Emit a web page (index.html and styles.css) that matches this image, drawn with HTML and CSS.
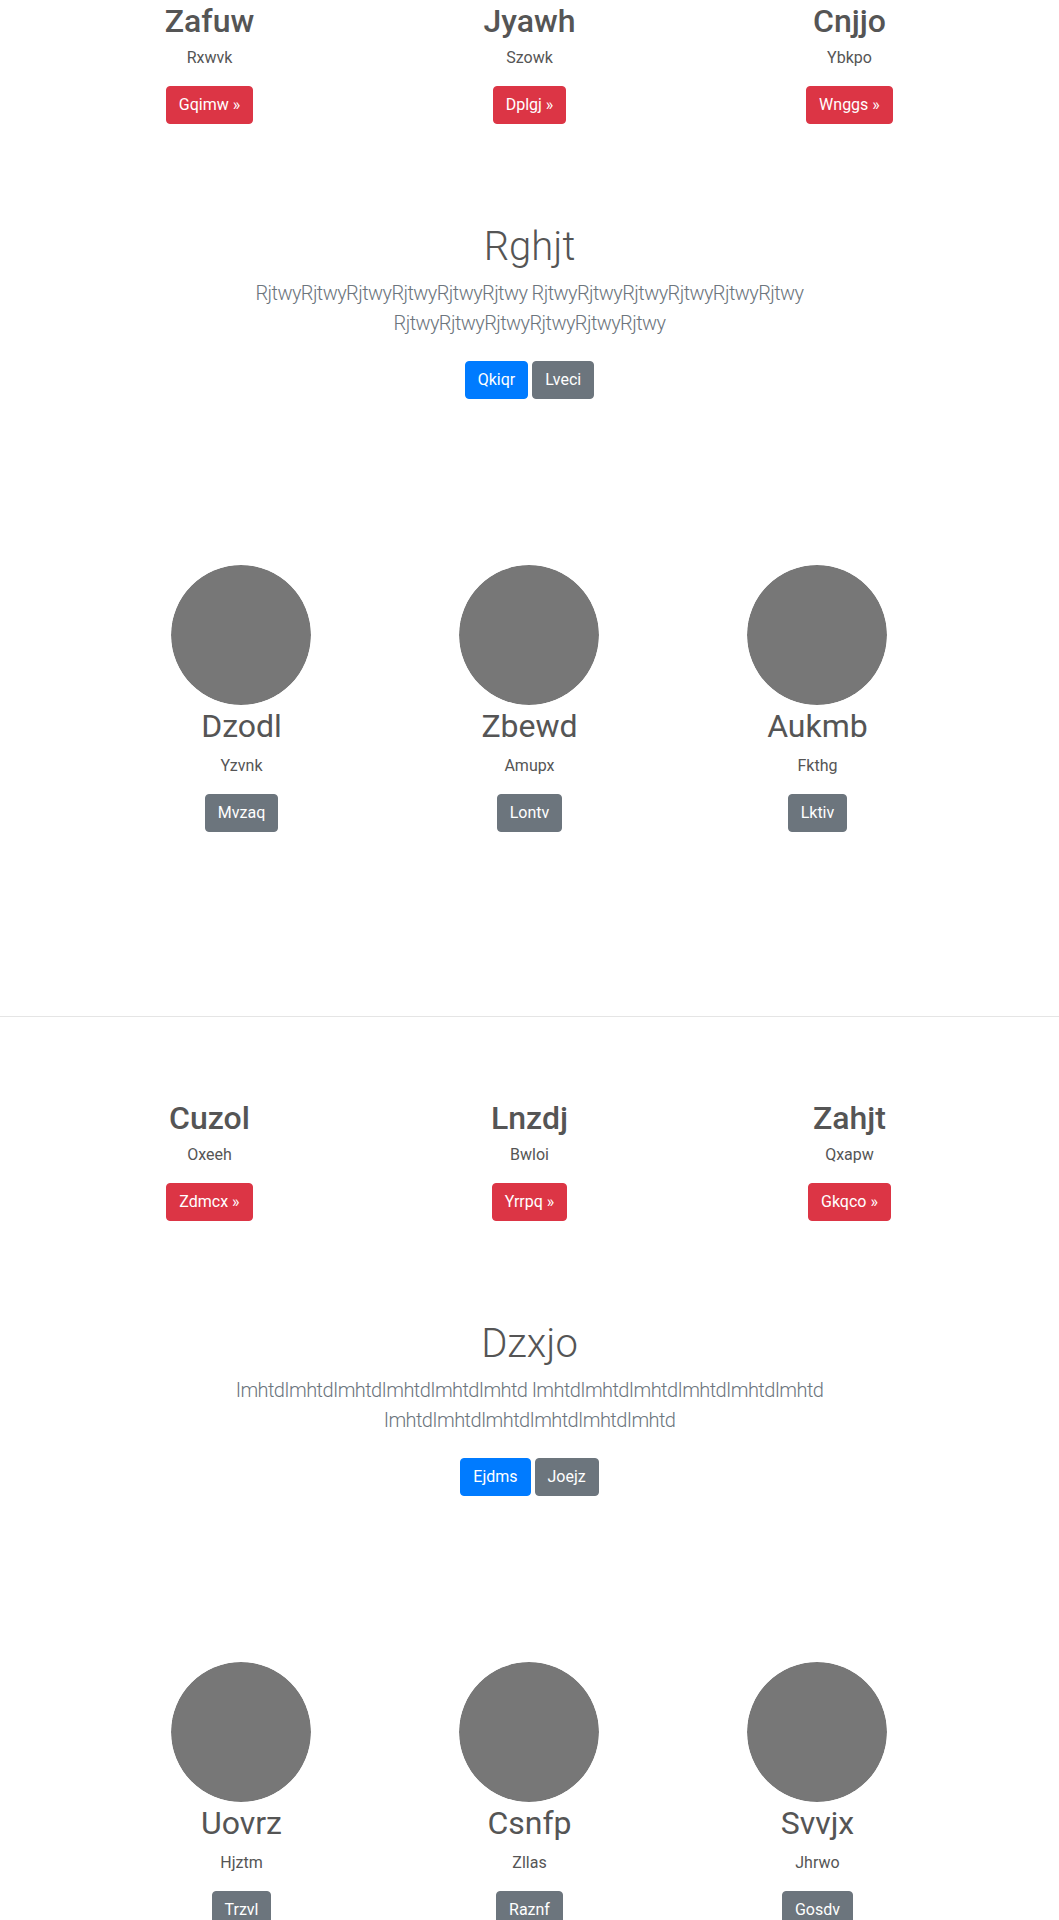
FILE: index.html
```html
<!DOCTYPE html>
<html lang="en">
<head>
<meta charset="utf-8">
<title>Page</title>
<link rel="stylesheet" href="styles.css">
</head>
<body>
<main>
  <section class="period">
    <div class="container">
      <div class="row">
        <div class="col feature">
          <h2 class="feature-title">Zafuw</h2>
          <p>Rxwvk</p>
          <a class="btn btn-danger" href="#">Gqimw &raquo;</a>
        </div>
        <div class="col feature">
          <h2 class="feature-title">Jyawh</h2>
          <p>Szowk</p>
          <a class="btn btn-danger" href="#">Dplgj &raquo;</a>
        </div>
        <div class="col feature">
          <h2 class="feature-title">Cnjjo</h2>
          <p>Ybkpo</p>
          <a class="btn btn-danger" href="#">Wnggs &raquo;</a>
        </div>
      </div>
    </div>

    <section class="hero">
      <div class="hero-inner">
        <h1 class="hero-title">Rghjt</h1>
        <p class="lead">RjtwyRjtwyRjtwyRjtwyRjtwyRjtwy RjtwyRjtwyRjtwyRjtwyRjtwyRjtwy RjtwyRjtwyRjtwyRjtwyRjtwyRjtwy</p>
        <p class="actions">
          <a class="btn btn-primary" href="#">Qkiqr</a>
          <a class="btn btn-secondary" href="#">Lveci</a>
        </p>
      </div>
    </section>

    <div class="container marketing">
      <div class="row marketing-row">
        <div class="col member">
          <svg class="avatar" width="140" height="140" viewBox="0 0 140 140" aria-hidden="true"><circle cx="70" cy="70" r="70" fill="#777"/></svg>
          <h2 class="member-name">Dzodl</h2>
          <p>Yzvnk</p>
          <p><a class="btn btn-secondary" href="#">Mvzaq</a></p>
        </div>
        <div class="col member">
          <svg class="avatar" width="140" height="140" viewBox="0 0 140 140" aria-hidden="true"><circle cx="70" cy="70" r="70" fill="#777"/></svg>
          <h2 class="member-name">Zbewd</h2>
          <p>Amupx</p>
          <p><a class="btn btn-secondary" href="#">Lontv</a></p>
        </div>
        <div class="col member">
          <svg class="avatar" width="140" height="140" viewBox="0 0 140 140" aria-hidden="true"><circle cx="70" cy="70" r="70" fill="#777"/></svg>
          <h2 class="member-name">Aukmb</h2>
          <p>Fkthg</p>
          <p><a class="btn btn-secondary" href="#">Lktiv</a></p>
        </div>
      </div>
    </div>

    <hr class="divider">
  </section>

  <section class="period">
    <div class="container">
      <div class="row">
        <div class="col feature">
          <h2 class="feature-title">Cuzol</h2>
          <p>Oxeeh</p>
          <a class="btn btn-danger" href="#">Zdmcx &raquo;</a>
        </div>
        <div class="col feature">
          <h2 class="feature-title">Lnzdj</h2>
          <p>Bwloi</p>
          <a class="btn btn-danger" href="#">Yrrpq &raquo;</a>
        </div>
        <div class="col feature">
          <h2 class="feature-title">Zahjt</h2>
          <p>Qxapw</p>
          <a class="btn btn-danger" href="#">Gkqco &raquo;</a>
        </div>
      </div>
    </div>

    <section class="hero">
      <div class="hero-inner">
        <h1 class="hero-title">Dzxjo</h1>
        <p class="lead">ImhtdImhtdImhtdImhtdImhtdImhtd ImhtdImhtdImhtdImhtdImhtdImhtd ImhtdImhtdImhtdImhtdImhtdImhtd</p>
        <p class="actions">
          <a class="btn btn-primary" href="#">Ejdms</a>
          <a class="btn btn-secondary" href="#">Joejz</a>
        </p>
      </div>
    </section>

    <div class="container marketing">
      <div class="row marketing-row">
        <div class="col member">
          <svg class="avatar" width="140" height="140" viewBox="0 0 140 140" aria-hidden="true"><circle cx="70" cy="70" r="70" fill="#777"/></svg>
          <h2 class="member-name">Uovrz</h2>
          <p>Hjztm</p>
          <p><a class="btn btn-secondary" href="#">Trzvl</a></p>
        </div>
        <div class="col member">
          <svg class="avatar" width="140" height="140" viewBox="0 0 140 140" aria-hidden="true"><circle cx="70" cy="70" r="70" fill="#777"/></svg>
          <h2 class="member-name">Csnfp</h2>
          <p>Zllas</p>
          <p><a class="btn btn-secondary" href="#">Raznf</a></p>
        </div>
        <div class="col member">
          <svg class="avatar" width="140" height="140" viewBox="0 0 140 140" aria-hidden="true"><circle cx="70" cy="70" r="70" fill="#777"/></svg>
          <h2 class="member-name">Svvjx</h2>
          <p>Jhrwo</p>
          <p><a class="btn btn-secondary" href="#">Gosdv</a></p>
        </div>
      </div>
    </div>

    <hr class="divider">
  </section>
</main>
</body>
</html>
```

FILE: styles.css
```css
*, *::before, *::after { box-sizing: border-box; }

html, body {
  margin: 0;
  padding: 0;
}

body {
  font-family: Roboto, "Noto Sans", "Liberation Sans", sans-serif;
  font-size: 16px;
  line-height: 1.5;
  color: #555;
  background: #fff;
}

h1, h2, p { margin-top: 0; }

p { margin-bottom: 16px; }

.container {
  width: 960px;
  margin: 0 auto;
  padding: 0 15px;
}

.row {
  display: flex;
  margin: 0 -15px;
}

.col {
  flex: 0 0 33.3333%;
  max-width: 33.3333%;
  padding: 0 15px;
  text-align: center;
}

.feature-title {
  font-size: 32px;
  font-weight: 500;
  line-height: 1.2;
  padding-top: 2px;
  margin-bottom: 6px;
}

.btn {
  display: inline-block;
  vertical-align: middle;
  font-size: 16px;
  font-weight: 400;
  line-height: 1.5;
  padding: 6px 12px;
  border: 1px solid transparent;
  border-radius: 4px;
  color: #fff;
  text-decoration: none;
  text-align: center;
}

.btn-danger { background: #dc3545; border-color: #dc3545; }
.btn-primary { background: #007bff; border-color: #007bff; }
.btn-secondary { background: #6c757d; border-color: #6c757d; }

.hero {
  padding: 96px 0;
  text-align: center;
}

.hero-inner {
  max-width: 640px;
  margin: 0 auto;
  padding: 0 15px;
}

.hero-title {
  font-size: 40px;
  font-weight: 300;
  line-height: 1.2;
  padding-top: 3px;
  margin-bottom: 7px;
}

.lead {
  font-size: 20px;
  font-weight: 300;
  letter-spacing: -0.6px;
  color: #6c757d;
  margin-bottom: 15px;
}

.actions { margin-bottom: 0; }
.actions .btn { margin: 8px 0; }

.marketing {
  padding: 62px 15px 64px;
}

.marketing-row {
  width: 864px;
  margin: 0 auto;
}

.member { margin-bottom: 24px; }

.member p {
  margin-left: 12px;
  margin-right: 12px;
}

.avatar {
  display: inline-block;
  vertical-align: middle;
  border-radius: 50%;
}

.member-name {
  font-size: 32px;
  font-weight: 400;
  line-height: 1.2;
  padding-top: 2px;
  margin-bottom: 8px;
}

.divider {
  margin: 80px 0;
  border: 0;
  border-top: 1px solid rgba(0, 0, 0, 0.1);
  height: 0;
}
```
